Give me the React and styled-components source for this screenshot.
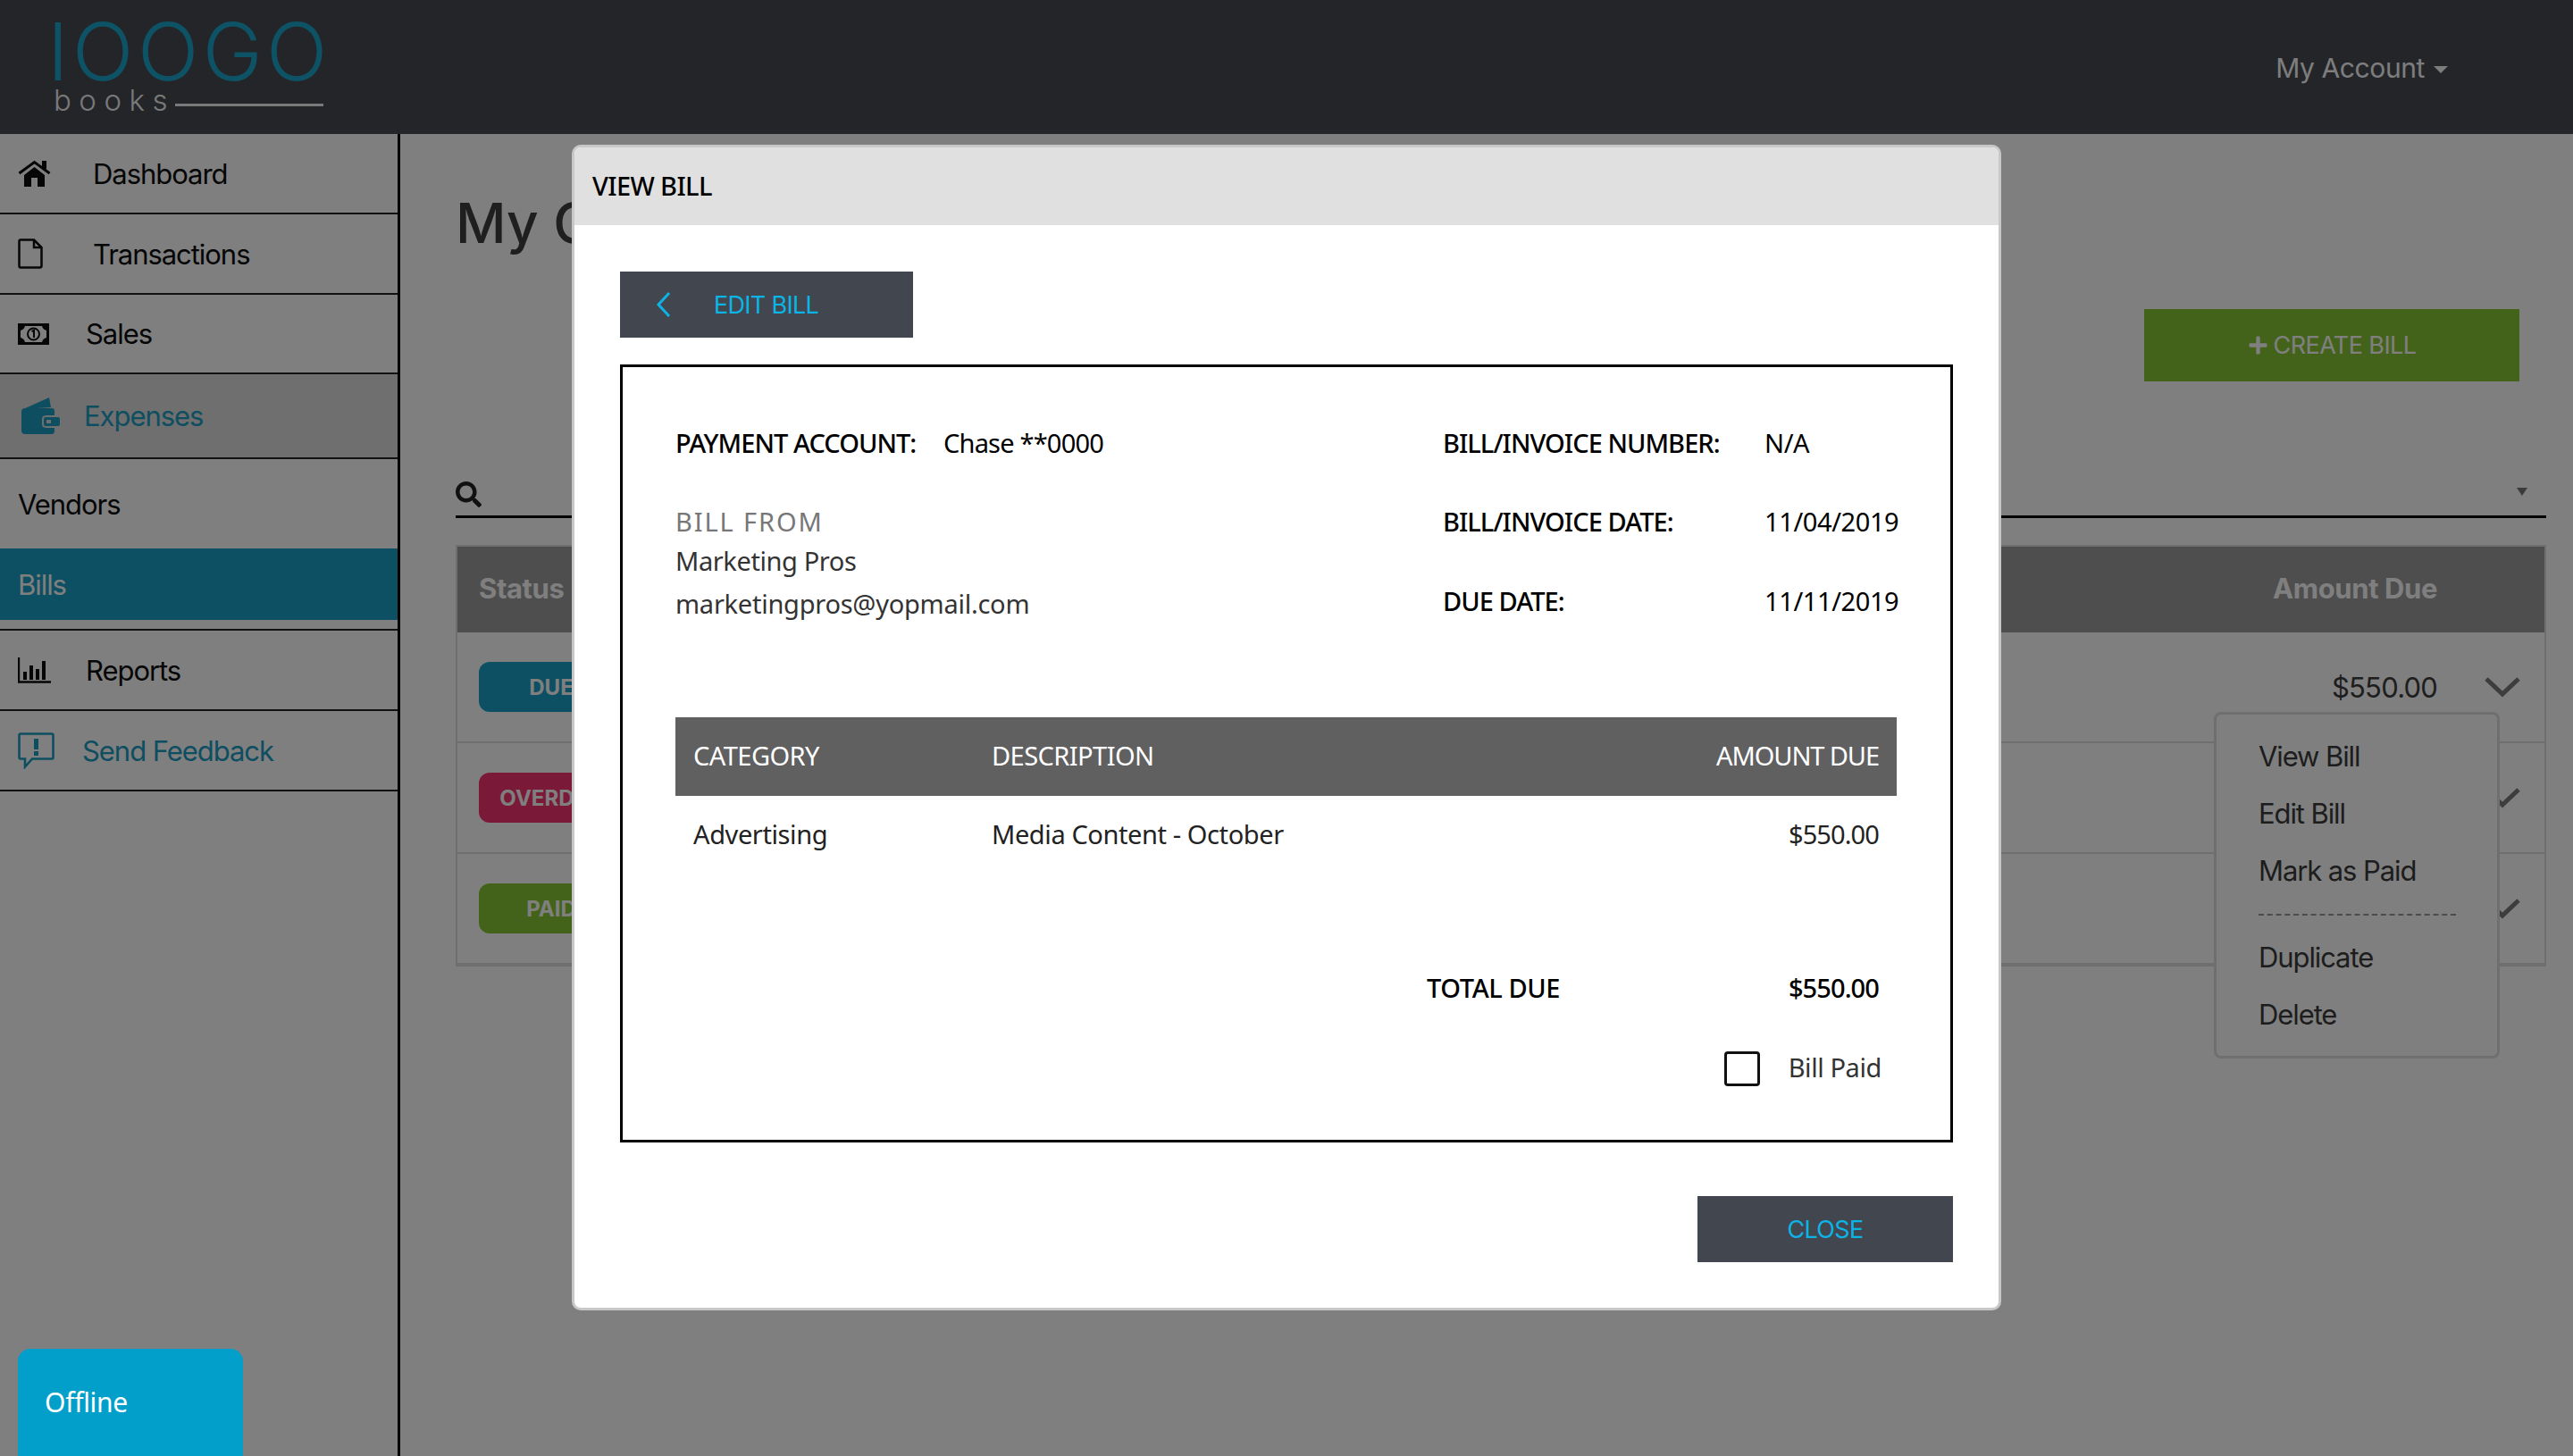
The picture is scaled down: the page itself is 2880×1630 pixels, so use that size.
import styled, { createGlobalStyle } from "styled-components";
import { FaSearch, FaPlus } from "react-icons/fa";

const Global = createGlobalStyle`
  * { box-sizing: border-box; }
  html, body { margin: 0; padding: 0; height: 100%; }
  body { font-family: "Inter", "Liberation Sans", sans-serif; background: #fff; overflow: hidden; }
`;

const Page = styled.div`
  width: 2880px;
  height: 1630px;
  display: flex;
  flex-direction: column;
  overflow: hidden;
`;

const Topbar = styled.header`
  height: 150px;
  flex: none;
  background: #464a52;
  display: flex;
  align-items: flex-start;
  justify-content: space-between;
  padding: 0 140px 0 60px;
`;

const Logo = styled.div`
  width: 302px;
  padding-top: 23px;
  color: #1ca4cc;
`;

const LogoMark = styled.div`
  font-family: "Inter", sans-serif;
  font-weight: 300;
  font-size: 90px;
  line-height: 70px;
  letter-spacing: 4.5px;
  margin-left: -7px;
  white-space: nowrap;
`;

const LogoSub = styled.div`
  display: flex;
  align-items: center;
  color: #f2f2f2;
  font-size: 33px;
  line-height: 32px;
  font-weight: 300;
  letter-spacing: 8.5px;
  margin-top: 3px;
  span { flex: none; }
  &::after {
    content: "";
    flex: 1;
    height: 3px;
    margin-top: 10px;
    background: #f2f2f2;
  }
`;

const Account = styled.div`
  margin-top: 58px;
  display: flex;
  align-items: center;
  gap: 10px;
  color: #fbfbfb;
  font-size: 30px;
  line-height: 36px;
  letter-spacing: -0.4px;
  &::after {
    content: "";
    margin-top: 4px;
    border-top: 8px solid #fbfbfb;
    border-left: 8px solid transparent;
    border-right: 8px solid transparent;
  }
`;

const Body = styled.div`
  flex: 1;
  display: flex;
  min-height: 0;
`;

const Sidebar = styled.nav`
  width: 448px;
  flex: none;
  border-right: 3px solid #000;
  font-size: 31px;
  letter-spacing: -1.05px;
`;

const NavRow = styled.div`
  height: ${(p) => p.$h}px;
  display: flex;
  align-items: center;
  padding-left: 20px;
  border-bottom: ${(p) => (p.$plain ? "none" : "2px solid #222")};
  color: ${(p) => (p.$accent ? "#1c9cc2" : "#0c0c0c")};
  background: ${(p) => (p.$open ? "#dedede" : "transparent")};
  ${(p) => p.$current && "background: #1ca0c6; color: #fff;"}
`;

const NavIcon = styled.span`
  width: ${(p) => p.$w}px;
  padding-left: ${(p) => p.$pad || 0}px;
  flex: none;
  display: flex;
  align-items: center;
`;

const NavGap = styled.div`
  height: 12px;
  border-bottom: 2px solid #222;
`;

const Main = styled.main`
  flex: 1;
  min-width: 0;
  padding: 60px 30px 0 62px;
`;

const Title = styled.h1`
  margin: 0;
  font-size: 62px;
  line-height: 80px;
  font-weight: 500;
  color: #3e3e3e;
  white-space: nowrap;
`;

const CreateRow = styled.div`
  display: flex;
  justify-content: flex-end;
  margin-top: 56px;
  padding-right: 30px;
`;

const CreateButton = styled.div`
  width: 420px;
  height: 81px;
  background: #88c634;
  color: #fff;
  display: flex;
  align-items: center;
  justify-content: center;
  gap: 6px;
  font-size: 27px;
  letter-spacing: -0.6px;
`;

const SearchRow = styled.div`
  height: 50px;
  margin-top: 103px;
  border-bottom: 3px solid #000;
  display: flex;
  align-items: center;
  justify-content: space-between;
  padding: 0 21px 0 0;
  color: #222;
  &::after {
    content: "";
    margin-bottom: 6px;
    border-top: 9px solid #777;
    border-left: 6px solid transparent;
    border-right: 6px solid transparent;
  }
`;

const BillsTable = styled.div`
  position: relative;
  margin-top: 30px;
  border: 2px solid #dedede;
`;

const HeadRow = styled.div`
  height: 96px;
  background: #9c9c9c;
  color: #fff;
  display: flex;
  align-items: center;
  justify-content: space-between;
  padding: 0 120px 3px 24px;
  font-size: 31px;
  font-weight: 700;
  letter-spacing: -0.4px;
`;

const BodyRow = styled.div`
  height: 124px;
  display: flex;
  align-items: center;
  justify-content: space-between;
  padding: 0 27px 0 24px;
  border-bottom: 2px solid #dedede;
  &:last-child { border-bottom: none; }
`;

const Badge = styled.span`
  width: 162px;
  height: 56px;
  border-radius: 12px;
  background: ${(p) => p.$color};
  color: #fff;
  display: flex;
  align-items: center;
  justify-content: center;
  font-size: 24px;
  font-weight: 700;
`;

const AmountCell = styled.div`
  display: flex;
  align-items: center;
  gap: 53px;
  font-size: 31px;
  color: #3c3c3c;
  letter-spacing: -0.8px;
`;

const Dropdown = styled.div`
  position: absolute;
  z-index: 2;
  top: 185px;
  left: 1966px;
  width: 320px;
  height: 388px;
  padding: 16px 47px 0;
  background: #fff;
  border: 3px solid #dedede;
  border-radius: 8px;
  color: #3a3a3a;
  font-size: 31px;
  letter-spacing: -1.1px;
`;

const MenuItem = styled.div`
  height: 64px;
  line-height: 62px;
`;

const MenuRule = styled.div`
  width: 221px;
  margin: 15px 0 16px;
  border-top: 2px dashed #999;
`;

const Overlay = styled.div`
  position: fixed;
  inset: 0;
  z-index: 5;
  background: rgba(0, 0, 0, 0.5);
  display: flex;
  justify-content: center;
  align-items: flex-start;
  padding-top: 162px;
`;

const Modal = styled.section`
  width: 1600px;
  background: #fff;
  border: 3px solid #c8c8c8;
  border-radius: 10px;
  overflow: hidden;
  font-family: "Noto Sans", "Open Sans", sans-serif;
  font-size: 29px;
  letter-spacing: -0.4px;
  color: #000;
`;

const ModalHead = styled.div`
  height: 87px;
  background: #e0e0e0;
  display: flex;
  align-items: center;
  padding: 0 0 3px 20px;
  font-weight: 500;
  letter-spacing: -0.6px;
`;

const ModalBody = styled.div`
  padding: 52px 51px 51px;
`;

const DarkButton = styled.div`
  width: ${(p) => p.$w}px;
  height: 74px;
  background: #42464e;
  color: #0cb4e6;
  display: flex;
  align-items: center;
  font-family: "Inter", sans-serif;
  font-size: 27px;
  letter-spacing: -0.7px;
  ${(p) => p.$center && "justify-content: center;"}
`;

const BackChevron = styled.svg`
  width: 18px;
  height: 30px;
  margin: 0 47px 0 40px;
`;

const BillCard = styled.div`
  margin-top: 30px;
  border: 3px solid #000;
  padding: 67px 60px 60px 59px;
`;

const InfoColumns = styled.div`
  display: flex;
  align-items: flex-start;
`;

const LeftInfo = styled.div`
  width: 859px;
  flex: none;
`;

const InfoRow = styled.div`
  display: flex;
  height: 40px;
  line-height: 36px;
  margin-bottom: ${(p) => p.$mb || 0}px;
`;

const InfoLabel = styled.span`
  font-weight: 500;
  width: ${(p) => p.$w}px;
  flex: none;
  white-space: nowrap;
  letter-spacing: -0.95px;
`;

const AccountValue = styled.span`
  letter-spacing: -0.8px;
`;

const BillFrom = styled.div`
  height: 40px;
  line-height: 36px;
  color: #777;
  letter-spacing: 1.9px;
`;

const VendorLine = styled.div`
  height: 48px;
  line-height: 44px;
  color: #333;
  letter-spacing: ${(p) => p.$spacing};
`;

const LinesGrid = styled.div`
  margin-top: 101px;
  display: grid;
  grid-template-columns: 334px 1fr auto;
  align-items: center;
  height: 88px;
  padding: 0 20px 4px 20px;
  background: #606061;
  color: #fff;
  letter-spacing: -0.55px;
`;

const LineRow = styled(LinesGrid)`
  margin-top: 0;
  background: none;
  color: #222;
  letter-spacing: -0.4px;
`;

const AmountHead = styled.span`
  letter-spacing: -1.1px;
`;

const Money = styled.span`
  letter-spacing: -0.9px;
`;

const TotalRow = styled.div`
  margin: 108px 0 0 841px;
  padding: 0 20px 4px 0;
  height: 40px;
  display: flex;
  align-items: center;
  justify-content: space-between;
  font-weight: 500;
`;

const PaidRow = styled.div`
  margin-top: 50px;
  height: 39px;
  display: flex;
  justify-content: flex-end;
  align-items: center;
  gap: 32px;
  padding-right: 17px;
  color: #333;
  span { margin-bottom: 4px; }
`;

const Checkbox = styled.div`
  width: 40px;
  height: 39px;
  border: 3px solid #111;
  border-radius: 4px;
`;

const ModalFoot = styled.div`
  display: flex;
  justify-content: flex-end;
  margin-top: 60px;
`;

const OfflineTab = styled.div`
  position: fixed;
  z-index: 6;
  left: 20px;
  bottom: 0;
  width: 252px;
  height: 120px;
  background: #029fca;
  border-radius: 14px 14px 0 0;
  color: #fff;
  padding: 40px 0 0 30px;
  font-family: "Noto Sans", sans-serif;
  font-size: 30px;
  line-height: 40px;
  letter-spacing: -0.3px;
`;

const HomeIcon = () => (
  <svg width="37" height="30" viewBox="0 0 37 30">
    <path d="M1.5 15 18.5 2.5 35.5 15" fill="none" stroke="currentColor" strokeWidth="3" />
    <rect x="27" y="1" width="5" height="9" fill="currentColor" />
    <path d="M7 17 18.5 8 30 17V30H22V20H15V30H7Z" fill="currentColor" />
  </svg>
);

const FileIcon = () => (
  <svg width="28" height="34" viewBox="0 0 28 34">
    <path d="M3 1.5H18L26.5 10V30.5Q26.5 32.5 24.5 32.5H3Q1.5 32.5 1.5 30.5V3Q1.5 1.5 3 1.5Z" fill="none" stroke="currentColor" strokeWidth="2.5" />
    <path d="M18 1.5V10H26.5" fill="none" stroke="currentColor" strokeWidth="2.5" />
  </svg>
);

const MoneyIcon = () => (
  <svg width="35" height="24" viewBox="0 0 35 24">
    <path fillRule="evenodd" fill="currentColor" d="M0 0H35V24H0ZM8 3Q7 7 3 8V16Q7 17 8 21H27Q28 17 32 16V8Q28 7 27 3Z" />
    <circle cx="17.5" cy="12" r="6.5" fill="none" stroke="currentColor" strokeWidth="2" />
    <path d="M15.5 9 18 8V16" fill="none" stroke="currentColor" strokeWidth="2" />
  </svg>
);

const WalletIcon = () => (
  <svg width="43" height="41" viewBox="0 0 43 41">
    <path d="M2 13 31 0 33 11Z" fill="currentColor" />
    <path fillRule="evenodd" fill="currentColor" d="M4 12H34Q37 12 37 15V20H28Q23 20 23 24V30Q23 34 28 34H37V37Q37 41 34 41H4Q0 41 0 37V16Q0 12 4 12Z" />
    <rect x="25" y="22" width="18" height="10" rx="2" fill="currentColor" />
    <rect x="28" y="25" width="5" height="4" fill="#dedede" />
  </svg>
);

const ReportsIcon = () => (
  <svg width="37" height="29" viewBox="0 0 37 29">
    <path d="M1 0V27.5H37" fill="none" stroke="currentColor" strokeWidth="2.4" />
    <path d="M6 16h4v9H6zM13 9h4v16h-4zM20 13h4v12h-4zM27 4h4v21h-4z" fill="currentColor" />
  </svg>
);

const FeedbackIcon = () => (
  <svg width="41" height="41" viewBox="0 0 41 41">
    <path d="M3 1.5H38Q39.5 1.5 39.5 3V28Q39.5 29.5 38 29.5H16L8 38.5V29.5H3Q1.5 29.5 1.5 28V3Q1.5 1.5 3 1.5Z" fill="none" stroke="currentColor" strokeWidth="2.6" />
    <path d="M18 7h5v12h-5zM18 21h5v5h-5z" fill="currentColor" />
  </svg>
);

const RowChevron = () => (
  <svg width="40" height="24" viewBox="0 0 40 24">
    <path d="M2 3 20 20 38 3" fill="none" stroke="#7a7a7a" strokeWidth="5" />
  </svg>
);

const navItems = [
  { label: "Dashboard", h: 90, w: 84, icon: <HomeIcon /> },
  { label: "Transactions", h: 90, w: 84, icon: <FileIcon /> },
  { label: "Sales", h: 89, w: 76, icon: <MoneyIcon /> },
  { label: "Expenses", h: 95, w: 74, pad: 4, icon: <WalletIcon />, accent: true, open: true },
  { label: "Vendors", h: 100, plain: true },
  { label: "Bills", h: 80, plain: true, current: true },
];

const billRows = [
  { status: "DUE", color: "#1ca0c6" },
  { status: "OVERDUE", color: "#f63470" },
  { status: "PAID", color: "#88c634" },
];

export default function App() {
  return (
    <Page>
      <Global />
      <Topbar>
        <Logo>
          <LogoMark>IOOGO</LogoMark>
          <LogoSub><span>books</span></LogoSub>
        </Logo>
        <Account>My Account</Account>
      </Topbar>
      <Body>
        <Sidebar>
          {navItems.map((item) => (
            <NavRow key={item.label} $h={item.h} $plain={item.plain} $accent={item.accent} $open={item.open} $current={item.current}>
              {item.icon && <NavIcon $w={item.w} $pad={item.pad}>{item.icon}</NavIcon>}
              {item.label}
            </NavRow>
          ))}
          <NavGap />
          <NavRow $h={90}>
            <NavIcon $w={76}><ReportsIcon /></NavIcon>
            Reports
          </NavRow>
          <NavRow $h={90} $accent>
            <NavIcon $w={72}><FeedbackIcon /></NavIcon>
            Send Feedback
          </NavRow>
        </Sidebar>
        <Main>
          <Title>My Company Bills</Title>
          <CreateRow>
            <CreateButton><FaPlus size={23} /> CREATE BILL</CreateButton>
          </CreateRow>
          <SearchRow><FaSearch size={29} /></SearchRow>
          <BillsTable>
            <HeadRow>
              <span>Status</span>
              <span>Amount Due</span>
            </HeadRow>
            {billRows.map((row) => (
              <BodyRow key={row.status}>
                <Badge $color={row.color}>{row.status}</Badge>
                <AmountCell>$550.00 <RowChevron /></AmountCell>
              </BodyRow>
            ))}
            <Dropdown>
              <MenuItem>View Bill</MenuItem>
              <MenuItem>Edit Bill</MenuItem>
              <MenuItem>Mark as Paid</MenuItem>
              <MenuRule />
              <MenuItem>Duplicate</MenuItem>
              <MenuItem>Delete</MenuItem>
            </Dropdown>
          </BillsTable>
        </Main>
      </Body>
      <Overlay>
        <Modal>
          <ModalHead>VIEW BILL</ModalHead>
          <ModalBody>
            <DarkButton $w={328}>
              <BackChevron viewBox="0 0 18 30">
                <path d="M15 2 3 15 15 28" fill="none" stroke="#0cb4e6" strokeWidth="3" />
              </BackChevron>
              EDIT BILL
            </DarkButton>
            <BillCard>
              <InfoColumns>
                <LeftInfo>
                  <InfoRow $mb={48}>
                    <InfoLabel $w={300}>PAYMENT ACCOUNT:</InfoLabel>
                    <AccountValue>Chase **0000</AccountValue>
                  </InfoRow>
                  <BillFrom>BILL FROM</BillFrom>
                  <VendorLine>Marketing Pros</VendorLine>
                  <VendorLine $spacing="-0.25px">marketingpros@yopmail.com</VendorLine>
                </LeftInfo>
                <div>
                  <InfoRow $mb={48}>
                    <InfoLabel $w={360}>BILL/INVOICE NUMBER:</InfoLabel>
                    <span>N/A</span>
                  </InfoRow>
                  <InfoRow $mb={49}>
                    <InfoLabel $w={360}>BILL/INVOICE DATE:</InfoLabel>
                    <span>11/04/2019</span>
                  </InfoRow>
                  <InfoRow>
                    <InfoLabel $w={360}>DUE DATE:</InfoLabel>
                    <span>11/11/2019</span>
                  </InfoRow>
                </div>
              </InfoColumns>
              <LinesGrid>
                <span>CATEGORY</span>
                <span>DESCRIPTION</span>
                <AmountHead>AMOUNT DUE</AmountHead>
              </LinesGrid>
              <LineRow>
                <span>Advertising</span>
                <span>Media Content - October</span>
                <Money>$550.00</Money>
              </LineRow>
              <TotalRow>
                <span>TOTAL DUE</span>
                <Money>$550.00</Money>
              </TotalRow>
              <PaidRow>
                <Checkbox />
                <span>Bill Paid</span>
              </PaidRow>
            </BillCard>
            <ModalFoot>
              <DarkButton $w={286} $center>CLOSE</DarkButton>
            </ModalFoot>
          </ModalBody>
        </Modal>
      </Overlay>
      <OfflineTab>Offline</OfflineTab>
    </Page>
  );
}
